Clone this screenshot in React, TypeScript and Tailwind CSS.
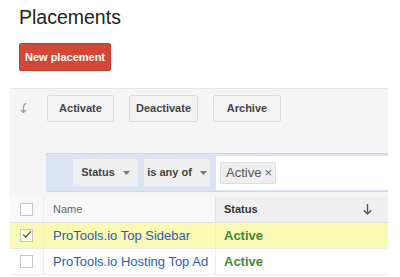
import React from 'react';

function Caret() {
  return (
    <svg width="7" height="4" viewBox="0 0 7 4" className="ml-[8px]">
      <path d="M0 0 L7 0 L3.5 4 Z" fill="#777" />
    </svg>
  );
}

function Checkbox({ checked }: { checked?: boolean }) {
  return (
    <div className="w-[13px] h-[13px] border border-[#c6c6c6] bg-white/60 flex items-center justify-center">
      {checked && (
        <svg width="13" height="11" viewBox="0 0 13 11" className="-mt-[2px] ml-[1px]">
          <path d="M1.5 5.5 L4.8 8.8 L11.5 1.5" stroke="#555" strokeWidth="1.6" fill="none" />
        </svg>
      )}
    </div>
  );
}

export default function App() {
  const toolbar = [
    { label: 'Activate', w: 'w-[67px]' },
    { label: 'Deactivate', w: 'w-[69px]' },
    { label: 'Archive', w: 'w-[68px]' },
  ];

  const rows = [
    { name: 'ProTools.io Top Sidebar', status: 'Active', selected: true },
    { name: 'ProTools.io Hosting Top Ad', status: 'Active', selected: false },
  ];

  return (
    <div className="w-[400px] h-[277px] bg-white overflow-hidden font-['Liberation_Sans',Arial,sans-serif]">
      {/* Page title */}
      <div className="pl-[19px] pt-[5px] text-[19.5px] leading-[24px] text-[#222]">Placements</div>

      <button className="mt-[14px] ml-[19px] h-[28px] w-[92px] bg-[#d14836] border border-[#c23b27] rounded-[2px] text-white text-[11px] font-bold">
        New placement
      </button>

      {/* Panel */}
      <div className="mt-[17px] ml-[10px] w-[378px] bg-[#f5f5f5] border-t border-[#e6e6e6]">
        {/* Toolbar */}
        <div className="flex items-start pt-[6px]">
          <div className="w-[37px] pl-[10px] pt-[8px]">
            <svg width="8" height="10" viewBox="0 0 8 10">
              <path d="M6.5 0.5 C4 0.8 3.5 2.5 3.5 5 L3.5 9.5" stroke="#999" strokeWidth="1.2" fill="none" />
              <path d="M0.8 6.8 L3.5 9.5 L6.2 6.8" stroke="#999" strokeWidth="1.2" fill="none" />
            </svg>
          </div>
          <div className="flex gap-[15px]">
            {toolbar.map((b) => (
              <button
                key={b.label}
                className={`${b.w} h-[27px] bg-[#f3f3f3] border border-[#dcdcdc] rounded-[2px] text-[11px] font-bold text-[#444]`}
              >
                {b.label}
              </button>
            ))}
          </div>
        </div>

        {/* Filter bar */}
        <div className="mt-[31px] ml-[36px] h-[39px] bg-[#dbe4f4] border-y border-[#cdd8ee] flex items-center pl-[27px]">
          <div className="w-[65px] h-[27px] bg-[#efefef] flex items-center justify-center text-[11px] font-bold text-[#444]">
            Status
            <Caret />
          </div>
          <div className="ml-[6px] w-[66px] h-[27px] bg-[#efefef] flex items-center justify-center text-[11px] font-bold text-[#444]">
            is any of
            <Caret />
          </div>
          <div className="ml-[6px] flex-1 h-[34px] bg-white flex items-center pl-[4px]">
            <div className="h-[22px] w-[56px] bg-[#efefef] border border-[#dedede] rounded-[2px] flex items-center pl-[5px] text-[13px] text-[#555]">
              Active
              <span className="ml-[3px] text-[13px] text-[#666] leading-none">×</span>
            </div>
          </div>
        </div>

        <div className="h-[5px]" />

        {/* Table */}
        <div className="bg-white">
          <div className="flex h-[26px] border-b border-[#e2e2e2] bg-[#f8f8f8] text-[11px]">
            <div className="w-[34px] flex items-center justify-center border-r border-[#ececec]">
              <Checkbox />
            </div>
            <div className="w-[171px] flex items-center pl-[9px] text-[#666]">Name</div>
            <div className="flex-1 flex items-center pl-[8px] pr-[16px] bg-[#f0f0f0] border-l border-[#e2e2e2] font-bold text-[#333]">
              Status
              <svg width="9" height="11" viewBox="0 0 9 11" className="ml-auto">
                <path d="M4.5 0 L4.5 10" stroke="#555" strokeWidth="1.4" />
                <path d="M0.8 6.3 L4.5 10 L8.2 6.3" stroke="#555" strokeWidth="1.4" fill="none" />
              </svg>
            </div>
          </div>
          {rows.map((r) => (
            <div
              key={r.name}
              className={`flex h-[26px] text-[13px] ${r.selected ? 'bg-[#fafab4]' : 'bg-white'} border-b border-[#ececec]`}
            >
              <div className="w-[34px] flex items-center justify-center border-r border-[#ececec]">
                <Checkbox checked={r.selected} />
              </div>
              <div className="w-[171px] flex items-center pl-[9px] text-[#2a5db0]">{r.name}</div>
              <div className="flex-1 flex items-center pl-[8px] border-l border-[#ececec] font-bold text-[#3d8a3d]">
                {r.status}
              </div>
            </div>
          ))}
        </div>
      </div>
    </div>
  );
}
